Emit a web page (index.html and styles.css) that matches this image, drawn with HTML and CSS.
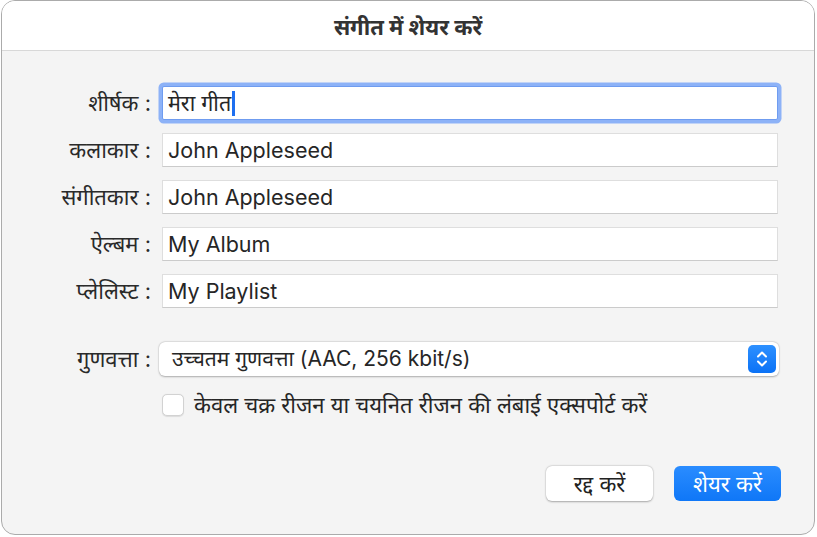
FILE: index.html
```html
<!DOCTYPE html>
<html lang="hi">
<head>
    <meta charset="UTF-8">
    <meta name="viewport" content="width=device-width, initial-scale=1.0">
    <title>संगीत में शेयर करें</title>
    <link rel="stylesheet" href="styles.css">
</head>
<body>
    <div class="window">
        <div class="title-bar">संगीत में शेयर करें</div>

        <div class="content">
            <div class="form-grid">
                <label class="label">शीर्षक :</label>
                <div class="field focused">मेरा गीत<span class="caret"></span></div>

                <label class="label">कलाकार :</label>
                <div class="field">John Appleseed</div>

                <label class="label">संगीतकार :</label>
                <div class="field">John Appleseed</div>

                <label class="label">ऐल्बम :</label>
                <div class="field">My Album</div>

                <label class="label">प्लेलिस्ट :</label>
                <div class="field">My Playlist</div>
            </div>

            <div class="form-grid quality-grid">
                <label class="label">गुणवत्ता :</label>
                <div class="popup">
                    <span class="popup-text">उच्चतम गुणवत्ता (AAC, 256 kbit/s)</span>
                    <span class="stepper">
                        <svg width="28" height="28" viewBox="0 0 28 28">
                            <path d="M10 11.5 L14 7.5 L18 11.5" fill="none" stroke="#fff" stroke-width="2" stroke-linecap="round" stroke-linejoin="round"/>
                            <path d="M10 16.5 L14 20.5 L18 16.5" fill="none" stroke="#fff" stroke-width="2" stroke-linecap="round" stroke-linejoin="round"/>
                        </svg>
                    </span>
                </div>

                <span></span>
                <div class="check-row">
                    <span class="checkbox"></span>
                    <span>केवल चक्र रीजन या चयनित रीजन की लंबाई एक्सपोर्ट करें</span>
                </div>
            </div>

            <div class="button-group">
                <button type="button" class="cancel-btn">रद्द करें</button>
                <button type="button" class="share-btn">शेयर करें</button>
            </div>
        </div>
    </div>
</body>
</html>
```

FILE: styles.css
```css
body {
    margin: 0;
    background: #fff;
    font-family: Inter, "Noto Sans", "Noto Sans Devanagari", sans-serif;
    color: #262626;
}
.window {
    box-sizing: border-box;
    width: 814px;
    height: 535px;
    margin: 0 0 0 1px;
    border: 1.5px solid #ababab;
    border-radius: 14px;
    overflow: hidden;
    background: #f4f4f4;
    display: flex;
    flex-direction: column;
}
.title-bar {
    height: 49px;
    flex-shrink: 0;
    background: #fff;
    border-bottom: 1px solid #d8d8d8;
    display: flex;
    align-items: center;
    justify-content: center;
    font-size: 22px;
    font-weight: bold;
    color: #333;
}
.content {
    padding: 35px 0 0 0;
}
.form-grid {
    display: grid;
    grid-template-columns: 149px 616px;
    column-gap: 11px;
    row-gap: 13px;
    align-items: center;
}
.label {
    text-align: right;
    font-size: 22px;
    line-height: 30px;
    color: #2a2a2a;
    white-space: nowrap;
}
.field {
    box-sizing: border-box;
    height: 34px;
    padding: 0 5px;
    background: #fff;
    border: 1px solid #dedede;
    border-bottom-color: #cbcbcb;
    font-size: 21.5px;
    line-height: 32px;
    color: #262626;
    white-space: nowrap;
}
.field.focused {
    border-color: #6f9cf0;
    border-radius: 2px;
    box-shadow: 0 0 0 3.5px #8db2f7;
}
.caret {
    display: inline-block;
    width: 2.5px;
    height: 25px;
    margin-left: 1px;
    vertical-align: -5px;
    background: #1e6ff0;
}
.quality-grid {
    margin-top: 34px;
    row-gap: 14px;
}
.popup {
    box-sizing: border-box;
    height: 34px;
    margin-left: -3px;
    width: 620px;
    padding: 0 3px 0 13px;
    background: #fff;
    border-radius: 6px;
    box-shadow: 0 0.5px 2px rgba(0, 0, 0, 0.28), 0 0 0 0.5px rgba(0, 0, 0, 0.06);
    display: flex;
    align-items: center;
    justify-content: space-between;
    font-size: 21px;
    line-height: 30px;
}
.stepper {
    width: 28px;
    height: 28px;
    border-radius: 5px;
    background: linear-gradient(#2d90ff, #0b72f6);
    display: flex;
}
.check-row {
    display: flex;
    align-items: center;
    gap: 10px;
    font-size: 22px;
    line-height: 30px;
}
.checkbox {
    box-sizing: border-box;
    width: 22px;
    height: 22px;
    border-radius: 5px;
    background: #fff;
    border: 1px solid #d2d2d2;
    box-shadow: 0 0.5px 1px rgba(0, 0, 0, 0.1);
}
.button-group {
    margin-top: 46px;
    padding-right: 33px;
    display: flex;
    justify-content: flex-end;
    gap: 21px;
}
button {
    width: 107px;
    height: 35px;
    border: none;
    border-radius: 6px;
    font-family: inherit;
    font-size: 22px;
    line-height: 30px;
    cursor: pointer;
}
.cancel-btn {
    background: #fff;
    color: #222;
    box-shadow: 0 0.5px 2px rgba(0, 0, 0, 0.3), 0 0 0 0.5px rgba(0, 0, 0, 0.05);
}
.share-btn {
    background: linear-gradient(#2a8cff, #0f77f7);
    color: #fff;
}
```
